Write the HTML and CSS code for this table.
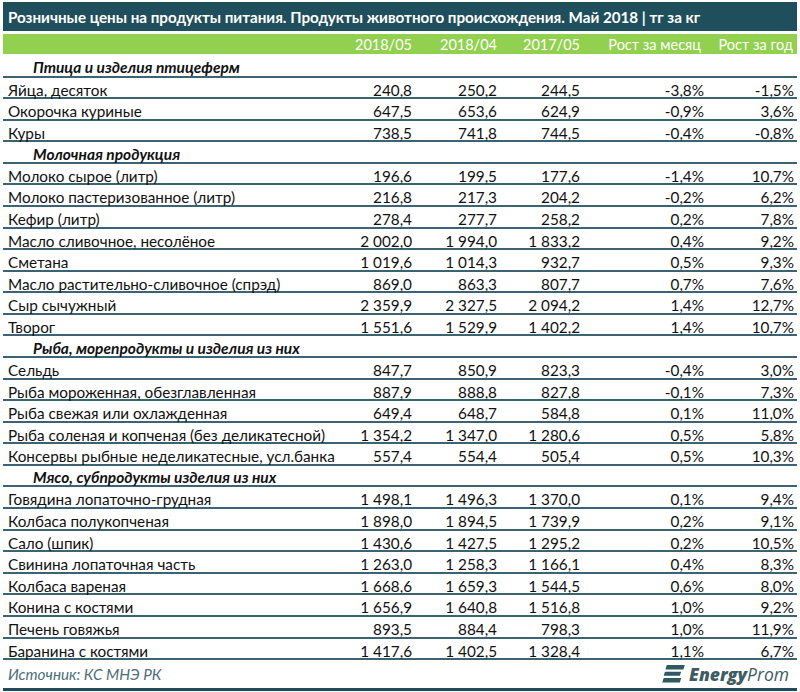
FILE: index.html
```html
<!DOCTYPE html>
<html lang="ru">
<head>
<meta charset="utf-8">
<title>Розничные цены</title>
<link rel="stylesheet" href="styles.css">
</head>
<body>
<div class="sheet">
  <div class="title">Розничные цены на продукты питания. Продукты животного происхождения. Май 2018 | тг за кг</div>
  <div class="row head">
    <span></span><span>2018/05</span><span>2018/04</span><span>2017/05</span><span>Рост за месяц</span><span>Рост за год</span>
  </div>
  <div class="row section first"><span>Птица и изделия птицеферм</span></div>
  <div class="row"><span>Яйца, десяток</span><span>240,8</span><span>250,2</span><span>244,5</span><span>-3,8%</span><span>-1,5%</span></div>
  <div class="row"><span>Окорочка куриные</span><span>647,5</span><span>653,6</span><span>624,9</span><span>-0,9%</span><span>3,6%</span></div>
  <div class="row"><span>Куры</span><span>738,5</span><span>741,8</span><span>744,5</span><span>-0,4%</span><span>-0,8%</span></div>
  <div class="row section"><span>Молочная продукция</span></div>
  <div class="row"><span>Молоко сырое (литр)</span><span>196,6</span><span>199,5</span><span>177,6</span><span>-1,4%</span><span>10,7%</span></div>
  <div class="row"><span>Молоко пастеризованное (литр)</span><span>216,8</span><span>217,3</span><span>204,2</span><span>-0,2%</span><span>6,2%</span></div>
  <div class="row"><span>Кефир (литр)</span><span>278,4</span><span>277,7</span><span>258,2</span><span>0,2%</span><span>7,8%</span></div>
  <div class="row"><span>Масло сливочное, несолёное</span><span>2 002,0</span><span>1 994,0</span><span>1 833,2</span><span>0,4%</span><span>9,2%</span></div>
  <div class="row"><span>Сметана</span><span>1 019,6</span><span>1 014,3</span><span>932,7</span><span>0,5%</span><span>9,3%</span></div>
  <div class="row"><span>Масло растительно-сливочное (спрэд)</span><span>869,0</span><span>863,3</span><span>807,7</span><span>0,7%</span><span>7,6%</span></div>
  <div class="row"><span>Сыр сычужный</span><span>2 359,9</span><span>2 327,5</span><span>2 094,2</span><span>1,4%</span><span>12,7%</span></div>
  <div class="row"><span>Творог</span><span>1 551,6</span><span>1 529,9</span><span>1 402,2</span><span>1,4%</span><span>10,7%</span></div>
  <div class="row section"><span>Рыба, морепродукты и изделия из них</span></div>
  <div class="row"><span>Сельдь</span><span>847,7</span><span>850,9</span><span>823,3</span><span>-0,4%</span><span>3,0%</span></div>
  <div class="row"><span>Рыба мороженная, обезглавленная</span><span>887,9</span><span>888,8</span><span>827,8</span><span>-0,1%</span><span>7,3%</span></div>
  <div class="row"><span>Рыба свежая или охлажденная</span><span>649,4</span><span>648,7</span><span>584,8</span><span>0,1%</span><span>11,0%</span></div>
  <div class="row"><span>Рыба соленая и копченая (без деликатесной)</span><span>1 354,2</span><span>1 347,0</span><span>1 280,6</span><span>0,5%</span><span>5,8%</span></div>
  <div class="row"><span>Консервы рыбные неделикатесные, усл.банка</span><span>557,4</span><span>554,4</span><span>505,4</span><span>0,5%</span><span>10,3%</span></div>
  <div class="row section"><span>Мясо, субпродукты изделия из них</span></div>
  <div class="row"><span>Говядина лопаточно-грудная</span><span>1 498,1</span><span>1 496,3</span><span>1 370,0</span><span>0,1%</span><span>9,4%</span></div>
  <div class="row"><span>Колбаса полукопченая</span><span>1 898,0</span><span>1 894,5</span><span>1 739,9</span><span>0,2%</span><span>9,1%</span></div>
  <div class="row"><span>Сало (шпик)</span><span>1 430,6</span><span>1 427,5</span><span>1 295,2</span><span>0,2%</span><span>10,5%</span></div>
  <div class="row"><span>Свинина лопаточная часть</span><span>1 263,0</span><span>1 258,3</span><span>1 166,1</span><span>0,4%</span><span>8,3%</span></div>
  <div class="row"><span>Колбаса вареная</span><span>1 668,6</span><span>1 659,3</span><span>1 544,5</span><span>0,6%</span><span>8,0%</span></div>
  <div class="row"><span>Конина с костями</span><span>1 656,9</span><span>1 640,8</span><span>1 516,8</span><span>1,0%</span><span>9,2%</span></div>
  <div class="row"><span>Печень говяжья</span><span>893,5</span><span>884,4</span><span>798,3</span><span>1,0%</span><span>11,9%</span></div>
  <div class="row"><span>Баранина с костями</span><span>1 417,6</span><span>1 402,5</span><span>1 328,4</span><span>1,1%</span><span>6,7%</span></div>
  <div class="footer">
    <span class="source">Источник: КС МНЭ РК</span>
    <span class="logo">
      <svg class="logo-mark" width="24" height="18" viewBox="0 0 26 20">
        <path d="M5 0 H25 L23.5 5 H3.5 Z" fill="#2c5a60"/>
        <path d="M3 7.5 H21 L19.5 12 H1.5 Z" fill="#2c5a60"/>
        <path d="M1.5 14.5 H21 L19.5 19.5 H0 Z" fill="#2c5a60"/>
      </svg>
      <span class="logo-text"><b>Energy</b>Prom</span>
    </span>
  </div>
</div>
</body>
</html>
```
FILE: styles.css
```css
html, body {
  margin: 0;
  padding: 0;
  background: #ffffff;
}
.sheet {
  width: 794px;
  margin: 0 0 0 3px;
  padding-top: 2px;
  font-family: Lato, "Open Sans", sans-serif;
  font-size: 15.3px;
  color: #111111;
  border-bottom: 3px solid #1e4b57;
}
.title {
  height: 29px;
  background: #1f4f5c;
  color: #ffffff;
  font-weight: bold;
  font-size: 15.2px;
  line-height: 31px;
  padding-left: 5px;
  margin-bottom: 3px;
  white-space: nowrap;
}
.row {
  display: grid;
  grid-template-columns: 327px 85px 85px 83px 124px 90px;
  height: 21.58px;
  box-sizing: border-box;
  padding-top: 3px;
  border-bottom: 2px solid #3a6472;
  align-items: center;
  white-space: nowrap;
}
.row span {
  text-align: right;
  padding-right: 3px;
}
.row span:first-child {
  text-align: left;
  padding-left: 5px;
  padding-right: 0;
}
.row.head {
  height: 20px;
  padding-top: 1px;
  background: #92d050;
  color: #ffffff;
  font-size: 14.5px;
  border-bottom: none;
}
.row.head span:nth-child(5) {
  padding-right: 6px;
}
.row.head span:last-child {
  padding-right: 4px;
}
.row.section {
  display: flex;
  font-weight: bold;
  font-style: italic;
  font-size: 15.5px;
}
.row.section.first {
  height: 23.5px;
  padding-top: 4px;
}
.row.section span:first-child {
  padding-left: 30px;
}
.footer {
  height: 28px;
  display: flex;
  align-items: center;
  justify-content: space-between;
}
.source {
  font-style: italic;
  color: #4e6e7c;
  padding-left: 5px;
}
.logo {
  display: flex;
  align-items: center;
  gap: 3px;
  padding-right: 8px;
  color: #3f5c62;
}
.logo-text {
  font-family: "Open Sans", sans-serif;
  font-style: italic;
  font-size: 17.5px;
  letter-spacing: 0;
}
.logo-text b {
  font-weight: 800;
}
```
